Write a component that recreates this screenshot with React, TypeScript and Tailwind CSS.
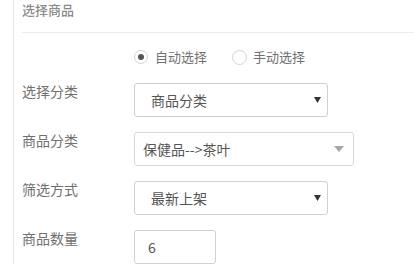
const font = { fontFamily: '"Noto Sans CJK SC", "Liberation Sans", sans-serif' };

const Caret = ({ light }: { light?: boolean }) =>
  light ? (
    <svg width="10" height="6" viewBox="0 0 10 6" className="shrink-0">
      <path d="M0 0 H10 L5 6 Z" fill="#a8a8a8" />
    </svg>
  ) : (
    <svg width="7" height="6" viewBox="0 0 7 6" className="shrink-0">
      <path d="M0 0 H7 L3.5 6 Z" fill="#333" />
    </svg>
  );

const Row = ({ label, children }: { label: string; children: React.ReactNode }) => (
  <div className="flex mb-[15px]">
    <div className="w-[112px] shrink-0 text-[14px] leading-[17px] text-[#707070]">{label}</div>
    {children}
  </div>
);

export default function App() {
  return (
    <div className="w-[414px] h-[264px] bg-white overflow-hidden" style={font}>
      <div className="ml-[13px] h-full border-l border-[#e8e8e8] pl-[8px]">
        {/* 标题 */}
        <div className="h-[33px] border-b border-[#ebebeb] text-[13px] leading-[19px] font-medium text-[#8a8a8a]">
          选择商品
        </div>

        <div className="flex items-center h-[20px] mt-[14px] mb-[16px] pl-[112px] text-[13px] text-[#707070]">
          <span className="w-[14px] h-[14px] rounded-full border border-[#d4d4d4] flex items-center justify-center mr-[7px]">
            <span className="w-[6px] h-[6px] rounded-full bg-[#555]" />
          </span>
          <span>自动选择</span>
          <span className="w-[15px] h-[15px] rounded-full border border-[#d4d4d4] ml-[25px] mr-[6px]" />
          <span>手动选择</span>
        </div>

        <Row label="选择分类">
          <div className="w-[194px] h-[34px] border border-[#d0d0d0] rounded-[3px] flex items-center pl-[16px] pr-[6px] text-[14px] text-[#555]">
            <span className="flex-1">商品分类</span>
            <Caret />
          </div>
        </Row>

        <Row label="商品分类">
          <div className="w-[220px] h-[34px] border border-[#d8d8d8] rounded-[3px] flex items-center pl-[8px] pr-[9px] text-[14px] text-[#555]">
            <span className="flex-1">保健品--&gt;茶叶</span>
            <Caret light />
          </div>
        </Row>

        <Row label="筛选方式">
          <div className="w-[194px] h-[34px] border border-[#d0d0d0] rounded-[3px] flex items-center pl-[16px] pr-[6px] text-[14px] text-[#555]">
            <span className="flex-1">最新上架</span>
            <Caret />
          </div>
        </Row>

        <Row label="商品数量">
          <div className="w-[82px] h-[34px] border border-[#d0d0d0] rounded-[3px] flex items-center pl-[13px] text-[14px] text-[#555]">
            6
          </div>
        </Row>
      </div>
    </div>
  );
}
